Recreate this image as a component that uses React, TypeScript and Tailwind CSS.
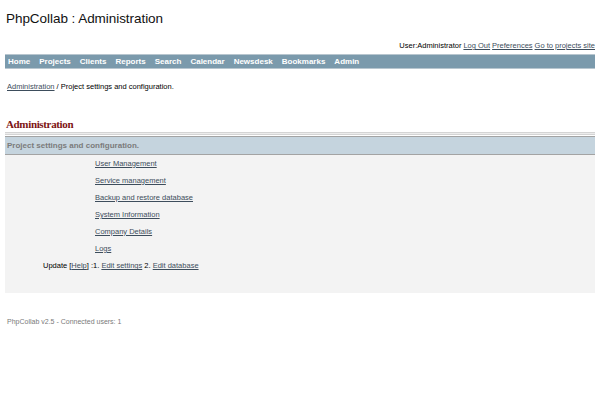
const navItems = ['Home', 'Projects', 'Clients', 'Reports', 'Search', 'Calendar', 'Newsdesk', 'Bookmarks', 'Admin'];

const adminLinks = [
  'User Management',
  'Service management',
  'Backup and restore database',
  'System Information',
  'Company Details',
  'Logs',
];

const sans = 'font-["Liberation_Sans",Arial,sans-serif]';

function Link({ children }: { children: React.ReactNode }) {
  return <a className="text-[#3d4d5c] underline underline-offset-1 cursor-pointer">{children}</a>;
}

export default function App() {
  return (
    <div className={`min-h-[400px] w-[600px] bg-white px-[5px] ${sans} text-[7.5px] text-black`}>
      {/* Title */}
      <h1 className="pt-[11px] pl-[1px] text-[13.5px] leading-[16px] tracking-[-0.05px] text-[#111]">
        PhpCollab : Administration
      </h1>

      {/* User line */}
      <div className="mt-[14px] flex justify-end gap-[2px] leading-[10px]">
        <span>User:Administrator</span>
        <Link>Log Out</Link>
        <Link>Preferences</Link>
        <Link>Go to projects site</Link>
      </div>

      {/* Navigation */}
      <nav className="mt-[3px] flex h-[15px] items-center gap-[9px] border-y border-[#b8c6cf] bg-[#7b9aac] pl-[3px] text-[8px] font-bold text-white">
        {navItems.map((item) => (
          <span key={item}>{item}</span>
        ))}
      </nav>

      {/* Breadcrumb */}
      <div className="mt-[13px] pl-[2px] leading-[10px]">
        <Link>Administration</Link> / Project settings and configuration.
      </div>

      {/* Heading */}
      <h2 className='mt-[26px] pl-[1px] font-["Liberation_Serif","Times_New_Roman",serif] text-[11px] font-semibold leading-[13px] tracking-[-0.35px] text-[#7d1313]'>
        Administration
      </h2>
      <div className="mt-[1px] h-[3px] border-y border-[#d4d4d4] bg-[#ececec]" />

      {/* Table header */}
      <div className="mt-[1px] flex h-[19px] items-center border-y border-[#a3a3a3] bg-[#c5d4de] pl-[2px] text-[8px] font-bold text-[#7b7b7b]">
        Project settings and configuration.
      </div>

      {/* Content */}
      <div className="flex h-[138px] flex-col bg-[#f3f3f3]">
        {adminLinks.map((label) => (
          <div key={label} className="flex h-[17px] items-center pl-[90px]">
            <Link>{label}</Link>
          </div>
        ))}
        <div className="flex h-[18px] items-center pl-[38px]">
          <span>
            Update [<Link>Help</Link>] :1. <Link>Edit settings</Link> 2. <Link>Edit database</Link>
          </span>
        </div>
      </div>

      {/* Footer */}
      <div className="mt-[24px] pl-[2px] text-[7px] leading-[10px] text-[#7a7a7a]">
        PhpCollab v2.5 - Connected users: 1
      </div>
    </div>
  );
}
